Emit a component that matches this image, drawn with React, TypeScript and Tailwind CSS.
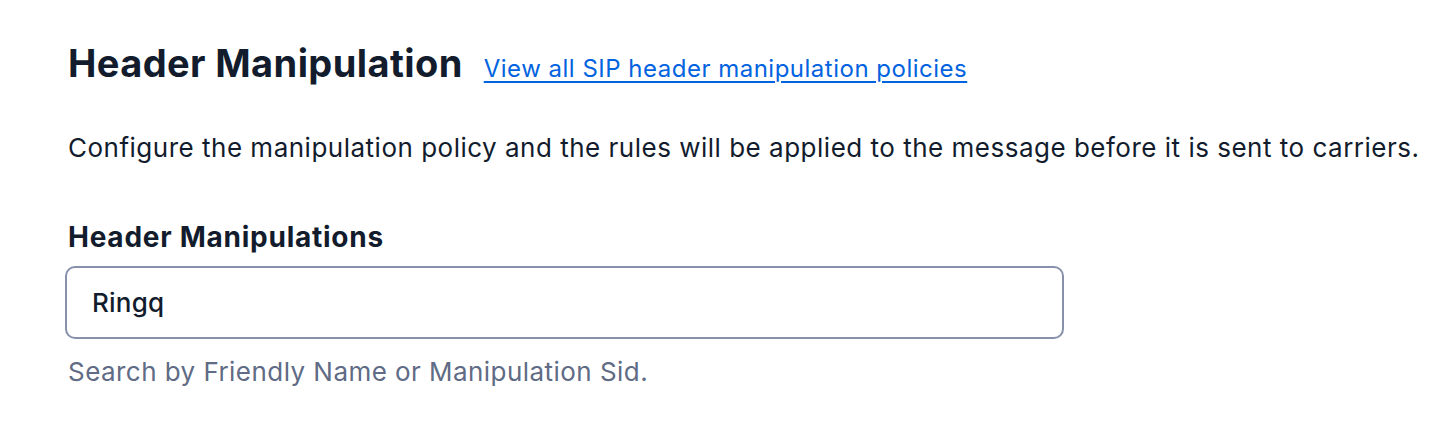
export default function App() {
  return (
    <div className="w-[1436px] h-[446px] bg-white pl-[68px] pt-[39px]" style={{ fontFamily: 'Inter, "Noto Sans", sans-serif' }}>
      <div className="flex items-baseline gap-[21px]">
        <h2 className="text-[38px] leading-[48px] font-bold text-[#121c2d] tracking-[0.4px]">Header Manipulation</h2>
        <a href="#" className="text-[24px] leading-[32px] text-[#0263e0] tracking-[0.5px] underline underline-offset-[4px] decoration-[1.5px]">View all SIP header manipulation policies</a>
      </div>
      <p className="mt-[45px] text-[26px] leading-[32px] text-[#121c2d] tracking-[0.5px]">Configure the manipulation policy and the rules will be applied to the message before it is sent to carriers.</p>
      <div className="mt-[55px] flex flex-col">
        <label className="text-[28px] leading-[36px] font-bold text-[#121c2d] tracking-[0.75px]">Header Manipulations</label>
        <div className="mt-[11px] ml-[-3px] w-[999px] h-[73px] rounded-[10px] border-2 border-[#8891aa] bg-white flex items-center px-[25px]">
          <span className="text-[26px] leading-[32px] font-medium text-[#121c2d] tracking-[0.2px]">Ringq</span>
        </div>
        <p className="mt-[17px] text-[26px] leading-[32px] text-[#606b85] tracking-[0.45px]">Search by Friendly Name or Manipulation Sid.</p>
      </div>
    </div>
  );
}
